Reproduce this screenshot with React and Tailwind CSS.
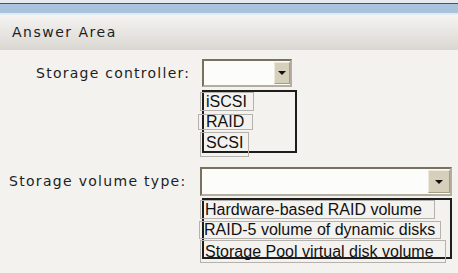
import React from "react";

function Select({ width, height, btn }) {
  return (
    <div
      className="flex justify-end border-2 border-t-[#77725f] border-l-[#77725f] border-r-[#b3ae9d] border-b-[#b3ae9d] bg-[#fcfcfb] py-[1px]"
      style={{ width, height }}
    >
      <div
        className="h-full flex items-center justify-center bg-[#d5cfbb] border border-t-[#ece8dc] border-l-[#ece8dc] border-r-[#a39d88] border-b-[#a39d88]"
        style={{ width: btn }}
      >
        <div className="w-0 h-0 border-l-[4px] border-r-[4px] border-t-[4px] border-l-transparent border-r-transparent border-t-[#111]" />
      </div>
    </div>
  );
}

function Item({ children, className }) {
  return (
    <div
      className={`border border-[#b5b1ac] text-[16px] text-[#111] leading-none flex items-center whitespace-nowrap ${className}`}
      style={{ fontFamily: '"Liberation Sans", Arial, sans-serif' }}
    >
      {children}
    </div>
  );
}

export default function App() {
  return (
    <div className="w-[458px] h-[273px] bg-[#f3f2ef] overflow-hidden" style={{ fontFamily: '"DejaVu Sans", Verdana, sans-serif' }}>
      {/* header strip */}
      <div className="h-[3px] bg-[#e8ebed]" />
      <div className="h-px bg-[#4b555b]" />
      <div className="h-[9px] bg-[#a9c3dc]" />
      <div className="h-[2px] bg-[#e3eaf0]" />
      <div className="h-[35px] bg-linear-to-b from-[#f5f4f2] to-[#dad7d2] flex items-center pl-[12px] text-[14px] tracking-[1.5px] text-[#1e1e1e]">
        Answer Area
      </div>

      {/* storage controller */}
      <div className="mt-[9px] flex items-center h-[28px] text-[14px] tracking-[1.25px] text-[#1e1e1e]">
        <div className="w-[202px] shrink-0 pl-[36px]">Storage controller:</div>
        <Select width={90} height={28} btn={16} />
      </div>
      <div className="mt-[3px] ml-[202px] w-[95px] h-[63px] border-2 border-[#1d1d1d]">
        <Item className="-ml-[4px] w-[54px] h-[19px] pl-[5px]">iSCSI</Item>
        <Item className="-ml-[6px] mt-[3px] w-[55px] h-[16px] pl-[7px]">RAID</Item>
        <Item className="-ml-[4px] mt-[2px] w-[49px] h-[25px] pl-[5px] items-start pt-[2px]">SCSI</Item>
      </div>

      {/* storage volume type */}
      <div className="mt-[14px] flex items-center h-[29px] text-[14px] tracking-[1.3px] text-[#1e1e1e]">
        <div className="w-[200px] shrink-0 pl-[9px]">Storage volume type:</div>
        <Select width={252} height={29} btn={22} />
      </div>
      <div className="mt-[2px] ml-[202px] w-[250px] h-[61px] border-2 border-[#1d1d1d]">
        <Item className="-ml-[4px] w-[235px] h-[19px] pl-[4px]">Hardware-based RAID volume</Item>
        <Item className="-ml-[5px] mt-[2px] w-[242px] h-[18px] pl-[4px]">RAID-5 volume of dynamic disks</Item>
        <Item className="-ml-[4px] mt-[1px] w-[246px] h-[23px] pl-[4px]">Storage Pool virtual disk volume</Item>
      </div>
    </div>
  );
}
